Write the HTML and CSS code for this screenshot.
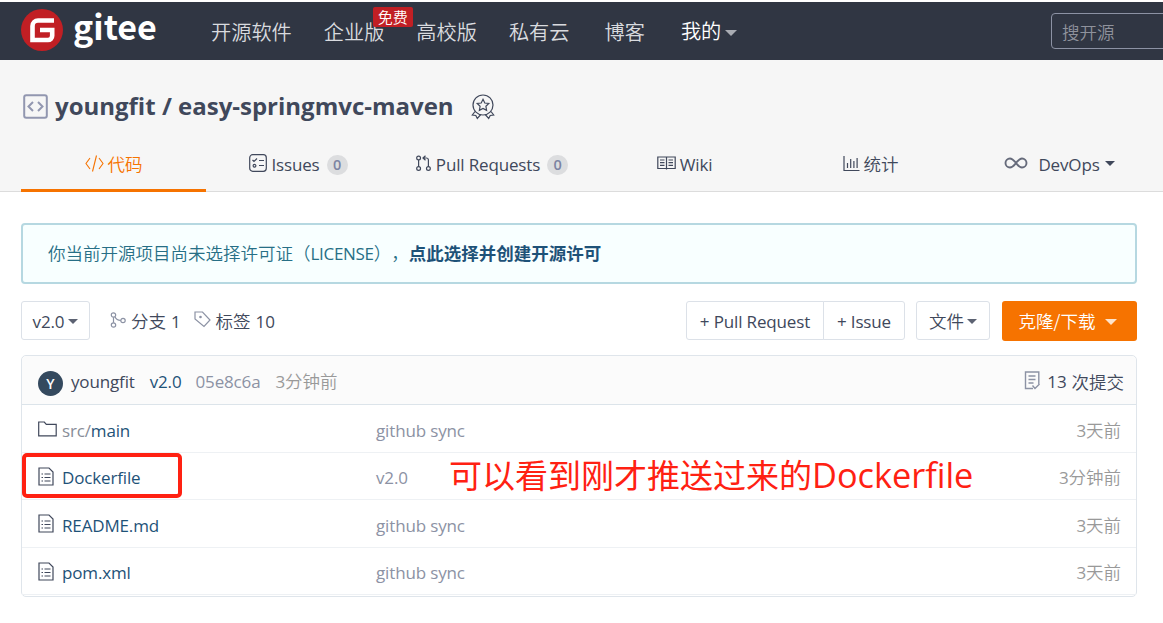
FILE: index.html
```html
<!DOCTYPE html>
<html lang="zh-CN">
<head>
<meta charset="utf-8">
<title>youngfit / easy-springmvc-maven</title>
<link rel="stylesheet" href="styles.css">
</head>
<body>
<header class="topbar">
  <a class="brand">
    <svg class="brand-mark" viewBox="0 0 42 42"><circle cx="21" cy="21" r="21" fill="#c11f24"/><path d="M33 11.500H17a5.500 5.500 0 0 0-5.500 5.500V31h15.500a4.200 4.200 0 0 0 4.200-4.200V21H19" fill="none" stroke="#fff" stroke-width="4.600"/></svg>
    <span class="brand-name">gitee</span>
  </a>
  <nav class="mainnav">
    <a>开源软件</a>
    <a class="promo">企业版<span class="badge">免费</span></a>
    <a>高校版</a>
    <a>私有云</a>
    <a class="blog">博客</a>
    <a class="mine">我的<i class="caret"></i></a>
  </nav>
  <div class="search">搜开源</div>
</header>
<section class="repo-head">
  <h1 class="repo-title">
    <svg class="repo-icon" viewBox="0 0 25 25" fill="none" stroke="#9297b0" stroke-width="2"><rect x="1.200" y="1.200" width="22.600" height="22.600" rx="2"/><path d="M10 8l-4.500 4.500L10 17M15 8l4.500 4.500L15 17"/></svg>
    <span class="repo-name">youngfit / easy-springmvc-maven</span>
    <svg class="medal" viewBox="0 0 24 26" fill="none" stroke="#40485b" stroke-width="1.200"><circle cx="12" cy="11" r="10"/><path d="M12 5.300l1.800 3.700 4 .5-2.900 2.800.7 4-3.600-1.900-3.600 1.900.7-4-2.900-2.800 4-.5zM4 17.500L1.300 21l3.500.5 1.500 3 3.500-4M20 17.500l2.700 3.500-3.500.5-1.500 3-3.500-4"/></svg>
  </h1>
  <nav class="tabs">
    <a class="tab active"><svg width="19" height="17" viewBox="0 0 19 17" fill="none" stroke="currentColor" stroke-width="1.100"><path d="M5 3L1 8.500 5 14M14 3l4 5.500L14 14M11.500 .5l-4 16"/></svg><span>代码</span></a>
    <a class="tab"><svg width="18" height="18" viewBox="0 0 18 18" fill="none" stroke="currentColor" stroke-width="1.200"><rect x=".7" y=".7" width="16.600" height="16.600" rx="3"/><path d="M3.500 6l1.500 1.500L8 4.500M10 6.500h5M10 11.500h5"/><circle cx="5.500" cy="11.800" r="1.400"/></svg><span class="lat">Issues</span><b class="count">0</b></a>
    <a class="tab pulls"><svg width="15" height="17" viewBox="0 0 15 17" fill="none" stroke="currentColor" stroke-width="1.200"><circle cx="2.600" cy="3" r="1.900"/><circle cx="2.600" cy="13.500" r="1.900"/><circle cx="12.400" cy="13.500" r="1.900"/><path d="M2.600 5v6.500M12.400 11.500V5a2 2 0 0 0-2-2H7M9.500 .8L7 3l2.500 2.200"/></svg><span class="lat">Pull Requests</span><b class="count">0</b></a>
    <a class="tab wiki"><svg width="19" height="16" viewBox="0 0 19 16" fill="none" stroke="currentColor" stroke-width="1.200"><path d="M.8 2h17.400v11.500H.8zM9.500 2v12.500M3 5h4.500M3 7.700h4.500M3 10.400h4.500M11.500 5H16M11.500 7.700H16M11.500 10.400H16"/></svg><span class="lat">Wiki</span></a>
    <a class="tab"><svg width="17" height="17" viewBox="0 0 17 17" fill="none" stroke="currentColor" stroke-width="1.200"><path d="M1 1v14.500h15.500M4.500 13V8M7.700 13V4M10.900 13V6M14.100 13V3"/></svg><span>统计</span></a>
    <a class="tab devops"><svg width="24" height="14" viewBox="0 0 24 14" fill="none" stroke="#666b7b" stroke-width="1.900"><path d="M12 7C9.800 4.500 8.500 2.500 6 2.500a4.500 4.500 0 0 0 0 9C8.500 11.500 9.800 9.500 12 7s3.500-4.500 6-4.500a4.500 4.500 0 0 1 0 9c-2.500 0-3.800-2-6-4.500z"/></svg><span class="lat">DevOps</span><i class="caret"></i></a>
  </nav>
</section>
<main class="content">
  <div class="notice"><span>你当前开源项目尚未选择许可证（<span class="lat">LICENSE</span>），</span><strong>点此选择并创建开源许可</strong></div>
  <div class="toolbar">
    <a class="btn branch"><span class="lat">v2.0</span><i class="caret"></i></a>
    <a class="stat"><svg width="16" height="16" viewBox="0 0 16 16" fill="none" stroke="currentColor" stroke-width="1.200"><circle cx="3.500" cy="3" r="2.200"/><circle cx="3.500" cy="13" r="2.200"/><circle cx="13" cy="8.500" r="2.200"/><path d="M3.500 5.200v5.600M5 4.800c1 2.500 3 3.700 5.800 3.700"/></svg><span>分支</span><span class="lat num">1</span></a>
    <a class="stat"><svg width="17" height="17" viewBox="0 0 17 17" fill="none" stroke="currentColor" stroke-width="1.200"><path d="M1 1h7.500l7.500 8-6 6.500L1 8z"/><circle cx="6.500" cy="6" r=".7" fill="currentColor"/></svg><span>标签</span><span class="lat num">10</span></a>
    <div class="btn-group"><a class="btn pr"><span class="lat">+ Pull Request</span></a><a class="btn issue"><span class="lat">+ Issue</span></a></div>
    <a class="btn files">文件<i class="caret"></i></a>
    <a class="btn clone">克隆/下载<i class="caret"></i></a>
  </div>
  <div class="tree">
    <div class="commit">
      <span class="avatar">Y</span>
      <span class="lat author">youngfit</span>
      <span class="lat message">v2.0</span>
      <span class="lat hash">05e8c6a</span>
      <span class="time"><span class="lat">3</span>分钟前</span>
      <span class="commits"><svg width="17" height="19" viewBox="0 0 17 19" fill="none" stroke="#8c92a4" stroke-width="1.400"><path d="M9 17.500H1.500V1h13.300v12M4.500 5h7M4.500 8.500h7M4.500 12h5M8.500 14.500l2.500 3 4.500-4.500"/></svg><span class="lat">13</span><span class="unit">次提交</span></span>
    </div>
    <div class="row">
      <span class="name"><svg width="19" height="16" viewBox="0 0 19 16" fill="none" stroke="#40485b" stroke-width="1.200"><path d="M.7 1h5.600l2 2.300h9.900v11.500H.7z"/></svg><span class="lat"><em>src/</em>main</span></span>
      <span class="lat note">github sync</span><span class="age"><span class="lat">3</span>天前</span>
    </div>
    <div class="row">
      <span class="name marked"><svg class="doc" viewBox="0 0 16 19" fill="none" stroke="#40485b" stroke-width="1.200"><path d="M1 1h10l4 4v13H1zM3.500 7H5M3.500 10.500H5M3.500 14H5M6.500 7h6M6.500 10.500h6M6.500 14h6"/></svg><span class="lat">Dockerfile</span></span>
      <span class="lat note">v2.0</span><span class="age"><span class="lat">3</span>分钟前</span>
      <span class="annotation">可以看到刚才推送过来的<span class="annotation-lat">Dockerfile</span></span>
    </div>
    <div class="row">
      <span class="name"><svg class="doc" viewBox="0 0 16 19" fill="none" stroke="#40485b" stroke-width="1.200"><path d="M1 1h10l4 4v13H1zM3.500 7H5M3.500 10.500H5M3.500 14H5M6.500 7h6M6.500 10.500h6M6.500 14h6"/></svg><span class="lat">README.md</span></span>
      <span class="lat note">github sync</span><span class="age"><span class="lat">3</span>天前</span>
    </div>
    <div class="row">
      <span class="name"><svg class="doc" viewBox="0 0 16 19" fill="none" stroke="#40485b" stroke-width="1.200"><path d="M1 1h10l4 4v13H1zM3.500 7H5M3.500 10.500H5M3.500 14H5M6.500 7h6M6.500 10.500h6M6.500 14h6"/></svg><span class="lat">pom.xml</span></span>
      <span class="lat note">github sync</span><span class="age"><span class="lat">3</span>天前</span>
    </div>
  </div>
</main>
</body>
</html>
```
FILE: styles.css
```css
*, *::after { box-sizing: border-box; }
html { overflow: hidden; }
body {
  margin: 0;
  padding-top: 2px;
  height: 623px;
  overflow: hidden;
  background: #fff;
  color: #40485b;
  font: 350 17.5px/24px "Noto Sans CJK SC", sans-serif;
}
svg { display: block; flex: none; }
a { white-space: nowrap; }
.lat { font-family: "Open Sans", "Noto Sans CJK SC", sans-serif; font-size: 17px; font-weight: 400; letter-spacing: -.15px; white-space: nowrap; }
.caret { display: inline-block; border: 5px solid transparent; border-top-color: currentColor; border-bottom: 0; }

.topbar { display: flex; height: 58px; background: #303643; overflow: hidden; }
.brand { display: flex; width: 190px; padding: 7px 0 0 21px; }
.brand-mark { width: 42px; height: 42px; }
.brand-name { margin: -2px 0 0 10px; color: #fff; font: 700 34px/38px "Noto Sans CJK SC", sans-serif; }
.mainnav { display: flex; gap: 32px; padding-left: 21px; color: #d9dbdf; font-size: 20.2px; line-height: 60px; }
.promo { position: relative; }
.badge { position: absolute; left: 49px; top: 5px; width: 40px; height: 20px; border-radius: 2px; background: #c11f24; color: #fff; font-size: 15px; line-height: 20px; text-align: center; }
.blog { margin-left: 3px; }
.mine { display: flex; align-items: center; margin-left: 4px; color: #fff; }
.mine .caret { margin: 4px 0 0 4px; border-width: 6px 6px 0; color: #a9acb3; }
.search { width: 140px; height: 36px; margin: 11px -28px 0 auto; padding-left: 10px; border: 1px solid #8c92a4; border-radius: 4px; color: #8f929c; font-size: 17.5px; line-height: 36px; }

.repo-head { height: 132px; padding: 28px 0 0 21px; border-bottom: 1px solid #dcdcdc; background: #f6f6f6; }
.repo-title { display: flex; height: 36px; margin: 0; align-items: center; }
.repo-icon { width: 25px; height: 25px; margin-left: 2px; }
.repo-name { margin-left: 7px; color: #40485b; font: 700 24px/36px "Open Sans", sans-serif; white-space: nowrap; }
.medal { width: 24px; height: 26px; margin: 2px 0 0 17px; }
.tabs { display: grid; grid-template-columns: 185px 185px 202px 185px 185px 193px; height: 68px; }
.tab { display: flex; align-items: center; justify-content: center; padding-top: 14px; border-bottom: 3px solid transparent; }
.tab svg { margin: 0 4px 1px 0; }
.tab .lat { padding-top: 2px; }
.pulls svg { margin-right: 5px; }
.wiki { padding-right: 2px; }
.tab.active { border-color: #f67300; color: #f67300; }
.count { min-width: 21px; height: 20px; margin: 3px 0 0 7px; border-radius: 10px; background: #dcdddf; color: #7c84a3; font: 600 14.500px/20px "Open Sans", sans-serif; text-align: center; }
.devops svg { margin-right: 10px; }
.devops .caret { margin: 0 0 1px 5px; }

.content { padding: 31px 26px 0 21px; }
.notice { height: 61px; padding: 0 25px; border: 2px solid #b6d8e1; border-radius: 4px; background: #f8ffff; color: #276f86; line-height: 56px; white-space: nowrap; text-spacing-trim: space-all; }
.notice strong { color: #1e5278; font-weight: 700; }
.notice .lat { letter-spacing: -.3px; }
.toolbar { display: flex; height: 40px; margin-top: 17px; align-items: flex-start; }
.btn { display: flex; height: 39px; align-items: center; justify-content: center; border: 1px solid #dce1e8; border-radius: 3px; background: #fff; }
.btn > .lat { padding-top: 2px; }
.btn .caret { margin-top: 2px; color: #5c6272; }
.branch { width: 69px; margin-right: 20px; }
.branch .caret { margin-left: 4px; }
.stat { display: flex; height: 39px; margin-right: 13px; align-items: center; }
.stat svg { margin: 0 5px 2px 0; color: #8c92a4; }
.num { padding-top: 2px; margin-left: 5px; }
.btn-group { display: flex; margin-left: auto; }
.pr { width: 138px; border-radius: 3px 0 0 3px; }
.issue { width: 82px; margin-left: -1px; border-radius: 0 3px 3px 0; }
.files { width: 74px; margin-left: 11px; }
.files .caret { margin-left: 3px; }
.clone { width: 135px; height: 40px; margin-left: 12px; padding-right: 3px; border: 0; background: #f67300; color: #fff; }
.clone .caret { margin-left: 10px; border-width: 6px 6px 0; color: #fde3cc; }

.tree { height: 242px; margin-top: 14px; border: 1px solid #dfe5eb; border-radius: 5px; }
.commit { display: flex; height: 49px; align-items: center; padding: 3px 12px 0 16px; border-bottom: 1px solid #dce4ea; border-radius: 5px 5px 0 0; background: #fbfbfb; }
.avatar { width: 25px; height: 25px; margin: 3px 8px 0 0; border-radius: 50%; background: #34495e; color: #fff; font: 600 14px/25px "Open Sans", sans-serif; text-align: center; }
.message { margin-left: 15px; color: #1e5278; }
.hash { margin-left: 14px; color: #8c92a4; }
.time { margin-left: 15px; color: #999; }
.commits { display: flex; margin-left: auto; align-items: center; }
.commits svg { margin: 0 6px 3px 0; }
.unit { margin-left: 5px; }
.row { display: grid; position: relative; height: 47.500px; grid-template-columns: 354px 1fr auto; align-items: center; padding: 4px 15px 0 0; border-bottom: 1px solid #eef1f4; }
.name { display: flex; position: relative; align-items: center; padding-left: 16px; color: #1e5278; }
.name svg { margin: 0 5px 3px 0; }
.name .doc { width: 16px; height: 19px; margin-right: 8px; }
.name em { color: #888d98; font-style: normal; }
.row .note, .name .lat { padding-top: 1px; }
.note { color: #8c92a4; }
.age { color: #999; }
.marked::after { position: absolute; left: 0; top: -12px; width: 160px; height: 45px; border: 4px solid #ff2112; border-radius: 5px; content: ""; }
.annotation { position: absolute; left: 427px; top: -2px; color: #ff2112; font-size: 33px; font-weight: 400; line-height: 46px; white-space: nowrap; }
.annotation-lat { font-family: "Open Sans", sans-serif; font-size: 34.3px; font-weight: 400; }
```
